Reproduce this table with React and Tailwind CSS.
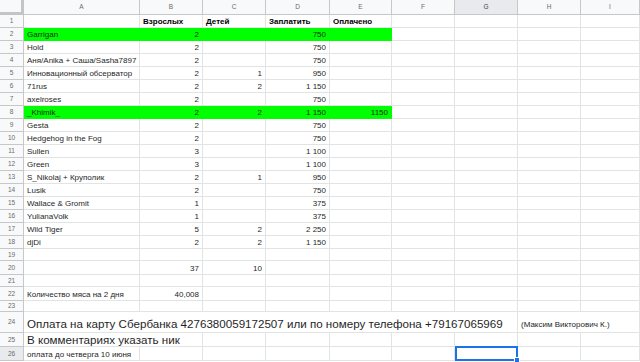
import clsx from "clsx"

const GRID =
  "grid grid-cols-[24px_116px_63px_63px_64px_62px_63px_63px_63px_minmax(0,1fr)]"

const LETTERS = ["A", "B", "C", "D", "E", "F", "G", "H", "I"]

const people = [
  ["Garrigan", "2", "", "750", "", true],
  ["Hold", "2", "", "750", ""],
  ["Аня/Anika + Саша/Sasha7897", "2", "", "750", ""],
  ["Инновационный обсерватор", "2", "1", "950", ""],
  ["71rus", "2", "2", "1 150", ""],
  ["axelroses", "2", "", "750", ""],
  ["_Khimik_", "2", "2", "1 150", "1150", true],
  ["Gesta", "2", "", "750", ""],
  ["Hedgehog in the Fog", "2", "", "750", ""],
  ["Sullen", "3", "", "1 100", ""],
  ["Green", "3", "", "1 100", ""],
  ["S_Nikolaj + Круполик", "2", "1", "950", ""],
  ["Lusik", "2", "", "750", ""],
  ["Wallace & Gromit", "1", "", "375", ""],
  ["YulianaVolk", "1", "", "375", ""],
  ["Wild Tiger", "5", "2", "2 250", ""],
  ["djDi", "2", "2", "1 150", ""],
]

function RowHead({ n, active }) {
  return (
    <div
      className={clsx(
        "flex items-center justify-center border-r border-b border-[#c7c7c7] text-[6.5px] text-[#6b6b6b]",
        active ? "bg-[#e8eaed]" : "bg-[#f8f9fa]"
      )}
    >
      {n}
    </div>
  )
}

function Cell({ children, right, green, bold, span, className }) {
  return (
    <div
      className={clsx(
        "flex items-end px-[3px] border-r border-b overflow-hidden whitespace-nowrap text-[8px] leading-[10px] text-[#1f1f1f]",
        green ? "bg-[#00ff00] border-[#00ff00]" : "border-[#e2e3e3]",
        right && "justify-end",
        bold && "font-bold text-black",
        span,
        className
      )}
    >
      {children}
    </div>
  )
}

function Empty({ count }) {
  return Array.from({ length: count }, (_, i) => <Cell key={i} />)
}

export default function App() {
  return (
    <div
      className="w-[640px] h-[362px] overflow-hidden bg-white"
      style={{ fontFamily: '"Liberation Sans", Arial, sans-serif' }}
    >
      {/* column letters */}
      <div className={clsx(GRID, "h-[15px] bg-[#f8f9fa]")}>
        <div className="border-r-[3px] border-b-[3px] border-[#c4c4c4]" />
        {LETTERS.map((l) => (
          <div
            key={l}
            className={clsx(
              "flex items-center justify-center border-r border-b border-[#c7c7c7] text-[6.5px]",
              l === "G" ? "bg-[#e8eaed] text-[#444]" : "text-[#6b6b6b]"
            )}
          >
            {l}
          </div>
        ))}
      </div>

      {/* row 1 */}
      <div className={clsx(GRID, "h-[13px]")}>
        <RowHead n={1} />
        <Cell />
        <Cell bold>Взрослых</Cell>
        <Cell bold>Детей</Cell>
        <Cell bold>Заплатить</Cell>
        <Cell bold>Оплачено</Cell>
        <Empty count={4} />
      </div>

      {people.map(([name, adults, kids, pay, paid, green], i) => (
        <div key={name} className={clsx(GRID, "h-[13px]")}>
          <RowHead n={i + 2} />
          <Cell green={green}>{name}</Cell>
          <Cell green={green} right>{adults}</Cell>
          <Cell green={green} right>{kids}</Cell>
          <Cell green={green} right>{pay}</Cell>
          <Cell green={green} right>{paid}</Cell>
          <Empty count={4} />
        </div>
      ))}

      <div className={clsx(GRID, "h-[12px]")}>
        <RowHead n={19} />
        <Empty count={9} />
      </div>

      <div className={clsx(GRID, "h-[14px]")}>
        <RowHead n={20} />
        <Cell />
        <Cell right>37</Cell>
        <Cell right>10</Cell>
        <Empty count={6} />
      </div>

      <div className={clsx(GRID, "h-[12px]")}>
        <RowHead n={21} />
        <Empty count={9} />
      </div>

      <div className={clsx(GRID, "h-[14px]")}>
        <RowHead n={22} />
        <Cell className="text-[7px] leading-[9px]">Количество мяса на 2 дня</Cell>
        <Cell right>40,008</Cell>
        <Empty count={7} />
      </div>

      <div className={clsx(GRID, "h-[11px]")}>
        <RowHead n={23} />
        <Empty count={9} />
      </div>

      <div className={clsx(GRID, "h-[21px]")}>
        <RowHead n={24} />
        <Cell span="col-span-7" className="text-[11.6px] leading-[13px] pb-[2px]">
          Оплата на карту Сбербанка 4276380059172507 или по номеру телефона +79167065969
        </Cell>
        <Cell span="col-span-2" className="text-[7.1px] leading-[9px] pb-[2px]">
          (Максим Викторович К.)
        </Cell>
      </div>

      <div className={clsx(GRID, "h-[14px]")}>
        <RowHead n={25} />
        <Cell span="col-span-2" className="text-[11.6px] leading-[13px]">
          В комментариях указать ник
        </Cell>
        <Empty count={7} />
      </div>

      <div className={clsx(GRID, "h-[14px]")}>
        <RowHead n={26} active />
        <Cell className="text-[6.6px] leading-[9px]">оплата до четверга 10 июня</Cell>
        <Empty count={5} />
        <div className="relative border-2 border-[#1a73e8] -mt-px">
          <span className="absolute -right-[4px] -bottom-[4px] w-[6px] h-[6px] bg-[#1a73e8] border border-white" />
        </div>
        <Empty count={2} />
      </div>
    </div>
  )
}
